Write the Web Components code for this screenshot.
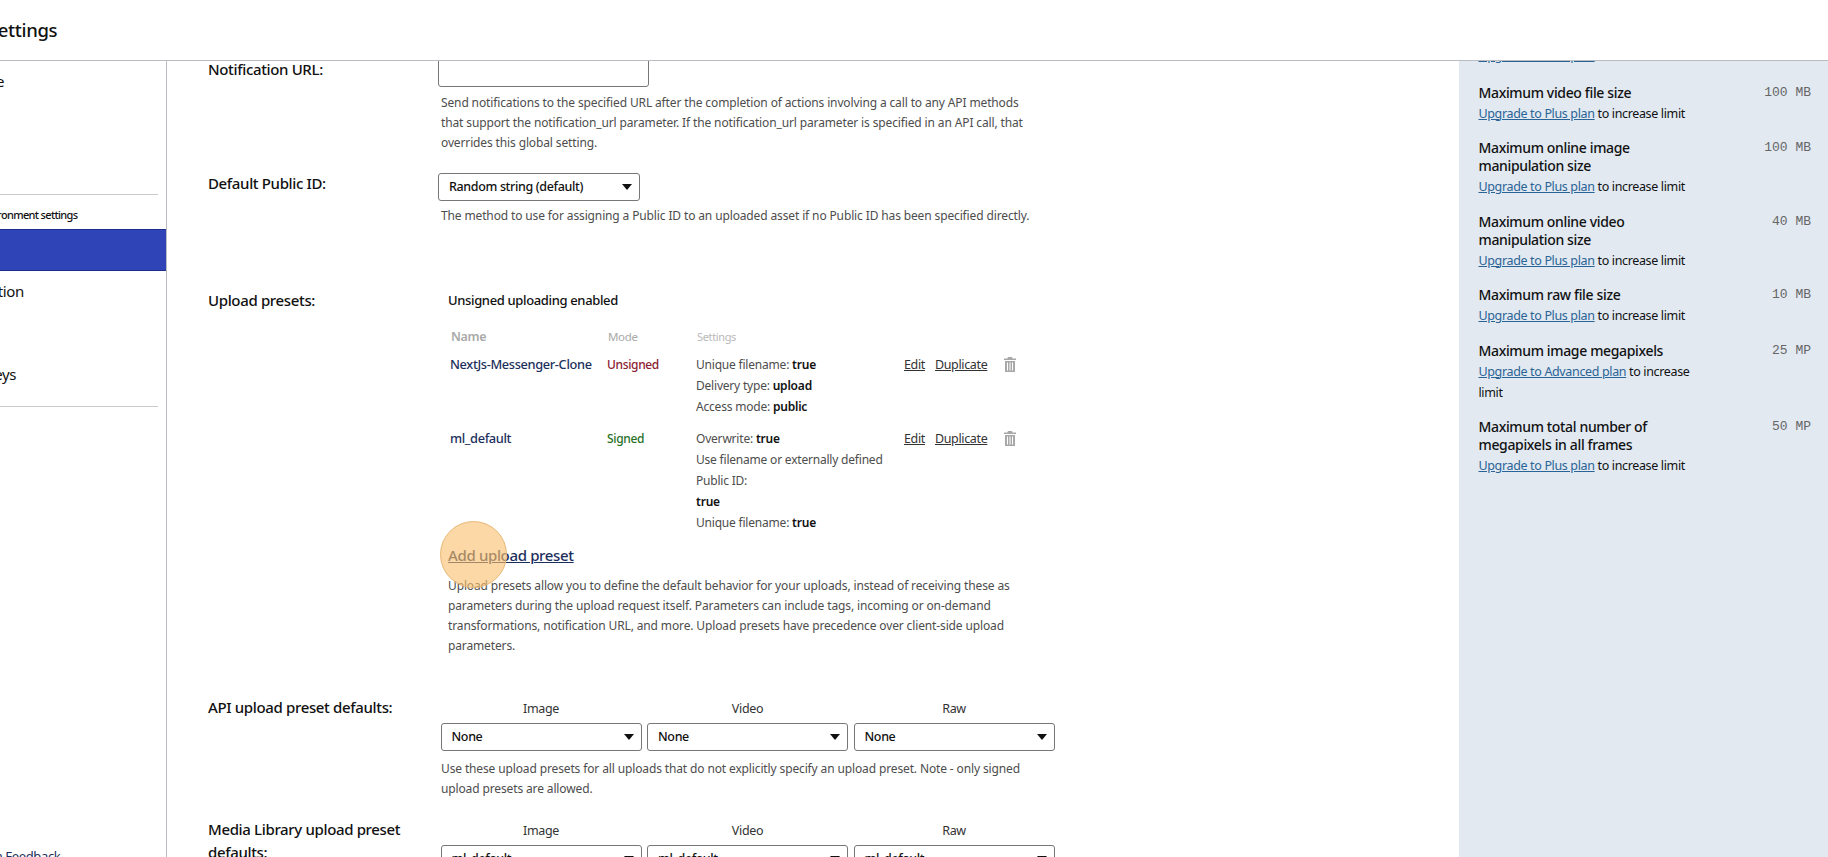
<!DOCTYPE html>
<html>
<head>
<meta charset="utf-8">
<title>Settings</title>
<style>
html, body {
  margin: 0;
  height: 857px;
  overflow: hidden;
  background: white;
  color: #111;
  font-family: "Noto Sans", "Open Sans", sans-serif;
  --squeeze: -0.022em;
  letter-spacing: var(--squeeze);
}
preset-row b { font-weight: 600; color: #111; }
</style>
</head>
<body>
<settings-page>
  <app-header slot="header">Settings</app-header>
  <side-nav slot="nav">
    <nav-item>My Profile</nav-item>
    <nav-item>Users</nav-item>
    <nav-item>Billing</nav-item>
    <span slot="label">Product environment settings</span>
    <nav-item slot="section" active>Upload</nav-item>
    <nav-item slot="section">Optimization</nav-item>
    <nav-item slot="section">Security</nav-item>
    <nav-item slot="section">Access Keys</nav-item>
    <span slot="footer">Design Feedback</span>
  </side-nav>
  <settings-form slot="main">
    <settings-row label="Notification URL:" drop="7" gap="0">
      <text-box></text-box>
      <help-text>Send notifications to the specified URL after the completion of actions involving a call to any API methods<br>that support the notification_url parameter. If the notification_url parameter is specified in an API call, that<br>overrides this global setting.</help-text>
    </settings-row>
    <settings-row label="Default Public ID:" drop="-1" gap="19.5">
      <drop-down width="202">Random string (default)</drop-down>
      <help-text gap="5">The method to use for assigning a Public ID to an uploaded asset if no Public ID has been specified directly.</help-text>
    </settings-row>
    <settings-row label="Upload presets:" gap="63" inset="10">
      <preset-table>
        <preset-row name="NextJs-Messenger-Clone" mode="Unsigned">
          <div>Unique filename: <b>true</b></div>
          <div>Delivery type: <b>upload</b></div>
          <div>Access mode: <b>public</b></div>
        </preset-row>
        <preset-row name="ml_default" mode="Signed">
          <div>Overwrite: <b>true</b></div>
          <div>Use filename or externally defined</div>
          <div>Public ID:</div>
          <div><b>true</b></div>
          <div>Unique filename: <b>true</b></div>
        </preset-row>
      </preset-table>
      <help-text gap="10.3" flush>Upload presets allow you to define the default behavior for your uploads, instead of receiving these as<br>parameters during the upload request itself. Parameters can include tags, incoming or on-demand<br>transformations, notification URL, and more. Upload presets have precedence over client-side upload<br>parameters.</help-text>
    </settings-row>
    <settings-row label="API upload preset defaults:" gap="39.5">
      <preset-defaults value="None"></preset-defaults>
      <help-text gap="8">Use these upload presets for all uploads that do not explicitly specify an upload preset. Note - only signed<br>upload presets are allowed.</help-text>
    </settings-row>
    <settings-row label="Media Library upload preset defaults:" gap="19.5">
      <preset-defaults value="ml_default"></preset-defaults>
    </settings-row>
  </settings-form>
  <limit-panel slot="aside">
    <limit-item value="">Maximum image file size</limit-item>
    <limit-item value="100 MB">Maximum video file size</limit-item>
    <limit-item value="100 MB">Maximum online image manipulation size</limit-item>
    <limit-item value="40 MB">Maximum online video manipulation size</limit-item>
    <limit-item value="10 MB">Maximum raw file size</limit-item>
    <limit-item value="25 MP" plan="Advanced">Maximum image megapixels</limit-item>
    <limit-item value="50 MP">Maximum total number of megapixels in all frames</limit-item>
  </limit-panel>
</settings-page>

<script>
function shadow(el, html) {
  var root = el.attachShadow({ mode: "open" });
  root.innerHTML = html;
  return root;
}

class SettingsPage extends HTMLElement {
  constructor() {
    super();
    shadow(this, `
<style>
:host { display: flex; flex-direction: column; width: 1828px; height: 857px; overflow: hidden; }
.body { flex: 1; display: flex; min-height: 0; }
</style>
<slot name="header"></slot>
<div class="body">
  <slot name="nav"></slot>
  <slot name="main"></slot>
  <slot name="aside"></slot>
</div>`);
  }
}

class AppHeader extends HTMLElement {
  constructor() {
    super();
    shadow(this, `
<style>
:host { display: block; flex: none; height: 60px; border-bottom: 1px solid #b9bdc2; overflow: hidden; box-sizing: content-box; }
div { margin-left: -12px; font-size: 18.5px; line-height: 60px; font-weight: 500; }
</style>
<div><slot></slot></div>`);
  }
}

class SideNav extends HTMLElement {
  constructor() {
    super();
    shadow(this, `
<style>
:host { display: flex; flex-direction: column; flex: none; width: 166px; border-right: 1px solid #b9bdc2; overflow: hidden; box-sizing: content-box; }
hr { flex: none; border: 0; height: 1px; background: #c8cacc; margin: 0 8px 0 -80px; }
.label { font-size: 11px; letter-spacing: -0.06em; font-weight: 500; line-height: 18px; height: 34px; padding-top: 11px; box-sizing: border-box; margin-left: -61px; white-space: nowrap; }
.foot { margin-top: auto; margin-bottom: -8px; margin-left: -38px; font-size: 13px; line-height: 18px; color: #1c2f5c; white-space: nowrap; }
</style>
<div class="top"><slot></slot></div>
<hr style="margin-top: 8px">
<div class="label"><slot name="label"></slot></div>
<div class="items"><slot name="section"></slot></div>
<hr style="margin-top: 10px">
<div class="foot"><slot name="footer"></slot></div>`);
  }
}

class NavItem extends HTMLElement {
  constructor() {
    super();
    shadow(this, `
<style>
:host { display: block; height: 41.7px; line-height: 41.7px; font-size: 15px; white-space: nowrap; overflow: hidden; }
:host([active]) { background: #2f44b6; color: white; box-shadow: inset 0 1px #1d2f8c, inset 0 -1px #1d2f8c; }
span { display: block; margin-left: -63px; }
</style>
<span><slot></slot></span>`);
  }
}

class SettingsForm extends HTMLElement {
  constructor() {
    super();
    shadow(this, `
<style>
:host { display: block; flex: 1; min-width: 0; overflow: hidden; padding-left: 41px; }
div { margin-top: -10px; }
</style>
<div><slot></slot></div>`);
  }
}

class SettingsRow extends HTMLElement {
  constructor() {
    super();
    var root = shadow(this, `
<style>
:host { display: grid; grid-template-columns: 230px 1fr; }
.label { font-size: 15px; line-height: 23px; font-weight: 500; padding-right: 20px; }
</style>
<div class="label"></div>
<div class="value"><slot></slot></div>`);
    var label = root.querySelector(".label");
    label.textContent = this.getAttribute("label");
    label.style.marginTop = (this.getAttribute("drop") || 0) + "px";
    this.style.marginTop = (this.getAttribute("gap") || 0) + "px";
    root.querySelector(".value").style.paddingLeft = (this.getAttribute("inset") || 0) + "px";
  }
}

class TextBox extends HTMLElement {
  constructor() {
    super();
    shadow(this, `
<style>
:host { display: block; width: 211px; height: 36px; box-sizing: border-box; border: 1px solid #777; border-radius: 3px; background: white; }
</style>`);
  }
}

class HelpText extends HTMLElement {
  constructor() {
    super();
    shadow(this, `
<style>
:host { display: block; font-size: 12px; line-height: 20px; color: #4d4d4d; letter-spacing: -0.011em; white-space: nowrap; margin-top: 6px; padding-left: 3px; }
:host([flush]) { padding-left: 0; }
</style>
<slot></slot>`);
    if (this.hasAttribute("gap")) this.style.marginTop = this.getAttribute("gap") + "px";
  }
}

class DropDown extends HTMLElement {
  constructor() {
    super();
    var root = shadow(this, `
<style>
:host { display: flex; align-items: center; justify-content: space-between; box-sizing: border-box; height: 28px; padding: 0 7px 1px 10px; border: 1px solid #777; border-radius: 3px; background: white; font-size: 12.5px; font-weight: 500; white-space: nowrap; overflow: hidden; }
i { width: 0; height: 0; border-left: 5px solid transparent; border-right: 5px solid transparent; border-top: 6px solid #111; margin-top: 1px; }
</style>
<span><slot></slot></span><i></i>`);
    if (this.hasAttribute("width")) this.style.width = this.getAttribute("width") + "px";
  }
}

class PresetDefaults extends HTMLElement {
  constructor() {
    super();
    var value = this.getAttribute("value");
    var col = (name) => `<div class="col"><div class="head">${name}</div><drop-down>${value}</drop-down></div>`;
    shadow(this, `
<style>
:host { display: grid; grid-template-columns: repeat(3, 201px); column-gap: 5.5px; padding-left: 2.5px; }
.head { font-size: 12.5px; line-height: 16px; color: #333; text-align: center; margin-bottom: 6px; margin-top: 5px; }
</style>
${col("Image")}${col("Video")}${col("Raw")}`);
  }
}

class PresetTable extends HTMLElement {
  constructor() {
    super();
    shadow(this, `
<style>
:host { display: block; }
.on { font-size: 13px; line-height: 23px; font-weight: 500; }
.head { display: grid; grid-template-columns: 157px 89px 1fr; margin: 17.5px 0 9px 3px; line-height: 16px; color: #a9a9a9; align-items: center; }
.head b { font-size: 12.5px; font-weight: 600; }
.head span { font-size: 11.5px; }
.head span:last-child { font-size: 11px; color: #b9b9b9; }
a { display: block; margin-top: 9px; font-size: 15px; line-height: 22px; font-weight: 500; color: #1c2f5c; text-decoration: underline; }
</style>
<div class="on">Unsigned uploading enabled</div>
<div class="head"><b>Name</b><span>Mode</span><span>Settings</span></div>
<slot></slot>
<a>Add upload preset</a>`);
  }
}

class PresetRow extends HTMLElement {
  constructor() {
    super();
    var mode = this.getAttribute("mode");
    shadow(this, `
<style>
:host { display: grid; grid-template-columns: 157px 89px 208px 1fr; margin: 0 0 11px 2px; font-size: 12px; line-height: 21px; }
.name { font-size: 12.8px; font-weight: 500; color: #1c2f5c; white-space: nowrap; }
.mode { font-weight: 500; }
.mode.Unsigned { color: #8c1c30; }
.mode.Signed { color: #27701f; }
.set { color: #4d4d4d; letter-spacing: -0.017em; }
::slotted(div) { white-space: nowrap; }
.act { display: flex; align-items: flex-start; gap: 10px; color: #333; font-size: 12.5px; }
.act a { text-decoration: underline; }
svg { margin: 3px 0 0 7px; }
</style>
<div class="name">${this.getAttribute("name")}</div>
<div class="mode ${mode}">${mode}</div>
<div class="set"><slot></slot></div>
<div class="act"><a>Edit</a><a>Duplicate</a>
<svg width="12" height="15" viewBox="0 0 12 15"><path fill="#a8a8a8" fill-rule="evenodd" d="M4 0h4l.6 1.6H12V3H0V1.6h3.4zM1 4h10v11H1zM3 5.5v8h1v-8zM5.5 5.5v8h1v-8zM8 5.5v8h1v-8z"/></svg></div>`);
  }
}

class LimitPanel extends HTMLElement {
  constructor() {
    super();
    shadow(this, `
<style>
:host { display: block; flex: none; width: 369px; box-sizing: border-box; background: #e2e9f1; padding: 0 17px 0 19.5px; overflow: hidden; }
div { margin-top: -35px; }
</style>
<div><slot></slot></div>`);
  }
}

class LimitItem extends HTMLElement {
  constructor() {
    super();
    var plan = this.getAttribute("plan") || "Plus";
    shadow(this, `
<style>
:host { display: grid; grid-template-columns: 1fr auto; margin-bottom: 15.5px; }
:host(:first-child) { margin-bottom: 17.5px; }
.title { font-size: 14px; line-height: 18px; font-weight: 500; width: 205px; }
.value { font-family: "Liberation Mono", monospace; font-size: 13px; line-height: 18px; color: #666; letter-spacing: 0; white-space: pre; }
.up { grid-column: 1 / 3; font-size: 12.5px; line-height: 21px; margin-top: 1px; width: 215px; }
a { color: #2a6496; text-decoration: underline; }
</style>
<div class="title"><slot></slot></div>
<div class="value">${this.getAttribute("value")}</div>
<div class="up"><a>Upgrade to ${plan} plan</a> to increase limit</div>`);
  }
}

class ClickSpot extends HTMLElement {
  constructor() {
    super();
    shadow(this, `
<style>
:host { position: absolute; left: 440px; top: 521px; width: 67px; height: 67px; box-sizing: border-box; border-radius: 50%; background: rgba(248, 192, 110, .62); border: 1px solid #e8b878; }
</style>`);
  }
}

customElements.define("settings-page", SettingsPage);
customElements.define("app-header", AppHeader);
customElements.define("side-nav", SideNav);
customElements.define("nav-item", NavItem);
customElements.define("settings-form", SettingsForm);
customElements.define("settings-row", SettingsRow);
customElements.define("text-box", TextBox);
customElements.define("help-text", HelpText);
customElements.define("drop-down", DropDown);
customElements.define("preset-defaults", PresetDefaults);
customElements.define("preset-table", PresetTable);
customElements.define("preset-row", PresetRow);
customElements.define("limit-panel", LimitPanel);
customElements.define("limit-item", LimitItem);
customElements.define("click-spot", ClickSpot);
document.body.append(document.createElement("click-spot"));
</script>
</body>
</html>
